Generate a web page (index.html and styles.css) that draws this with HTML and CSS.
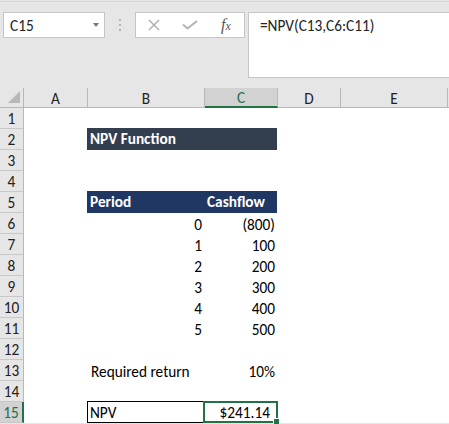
FILE: index.html
```html
<!DOCTYPE html>
<html>
<head>
<meta charset="utf-8">
<link rel="stylesheet" href="styles.css">
</head>
<body>
<div class="toolbar">
  <div class="namebox"><span class="ref">C15</span><span class="caret"></span></div>
  <div class="grip">
    <svg width="2" height="12" viewBox="0 0 2 12"><rect x="0" y="0" width="2" height="2" fill="#b4b4b4"/><rect x="0" y="5" width="2" height="2" fill="#b4b4b4"/><rect x="0" y="10" width="2" height="2" fill="#b4b4b4"/></svg>
  </div>
  <div class="fxbox">
    <svg class="ico-x" width="12" height="12" viewBox="0 0 12 12"><path d="M1 1 L11 11 M11 1 L1 11" stroke="#ababab" stroke-width="1.4" fill="none"/></svg>
    <svg class="ico-ok" width="16" height="10" viewBox="0 0 16 10"><path d="M1 4.5 L5.5 8.5 L15 1" stroke="#b4b4b4" stroke-width="2" fill="none"/></svg>
    <span class="fx">f<span class="fxx">x</span></span>
  </div>
  <div class="formula">=NPV(C13,C6:C11)</div>
</div>

<div class="sheet">
  <div class="hd corner"><svg width="14" height="14" viewBox="0 0 14 14"><polygon points="13,1 13,13 1,13" fill="#b8b8b8"/></svg></div>
  <div class="hd">A</div>
  <div class="hd">B</div>
  <div class="hd sel">C</div>
  <div class="hd">D</div>
  <div class="hd">E</div>
  <div class="hd end"></div>

  <div class="rh">1</div><div class="c"></div><div class="c"></div><div class="c"></div><div class="c"></div><div class="c"></div><div class="c"></div>

  <div class="rh">2</div><div class="c"></div><div class="band gray"><span class="bl">NPV Function</span></div><div class="c"></div><div class="c"></div><div class="c"></div>

  <div class="rh">3</div><div class="c"></div><div class="c"></div><div class="c"></div><div class="c"></div><div class="c"></div><div class="c"></div>

  <div class="rh">4</div><div class="c"></div><div class="c"></div><div class="c"></div><div class="c"></div><div class="c"></div><div class="c"></div>

  <div class="rh">5</div><div class="c"></div><div class="band blue"><span class="bl">Period</span><span class="br">Cashflow</span></div><div class="c"></div><div class="c"></div><div class="c"></div>

  <div class="rh">6</div><div class="c"></div><div class="c r">0</div><div class="c r">(800)</div><div class="c"></div><div class="c"></div><div class="c"></div>
  <div class="rh">7</div><div class="c"></div><div class="c r">1</div><div class="c r">100</div><div class="c"></div><div class="c"></div><div class="c"></div>
  <div class="rh">8</div><div class="c"></div><div class="c r">2</div><div class="c r">200</div><div class="c"></div><div class="c"></div><div class="c"></div>
  <div class="rh">9</div><div class="c"></div><div class="c r">3</div><div class="c r">300</div><div class="c"></div><div class="c"></div><div class="c"></div>
  <div class="rh">10</div><div class="c"></div><div class="c r">4</div><div class="c r">400</div><div class="c"></div><div class="c"></div><div class="c"></div>
  <div class="rh">11</div><div class="c"></div><div class="c r">5</div><div class="c r">500</div><div class="c"></div><div class="c"></div><div class="c"></div>

  <div class="rh">12</div><div class="c"></div><div class="c"></div><div class="c"></div><div class="c"></div><div class="c"></div><div class="c"></div>

  <div class="rh">13</div><div class="c"></div><div class="c">Required return</div><div class="c r">10%</div><div class="c"></div><div class="c"></div><div class="c"></div>

  <div class="rh">14</div><div class="c"></div><div class="c"></div><div class="c"></div><div class="c"></div><div class="c"></div><div class="c"></div>

  <div class="rh rsel">15</div><div class="c"></div><div class="c boxed">NPV</div><div class="c r active">$241.14<span class="handle"></span></div><div class="c"></div><div class="c"></div><div class="c"></div>
</div>
</body>
</html>
```

FILE: styles.css
```css
html, body {
  margin: 0;
  padding: 0;
}
body {
  width: 449px;
  height: 424px;
  overflow: hidden;
  background: #e6e6e6;
  font-family: Carlito, Lato, "Liberation Sans", sans-serif;
  font-size: 15.3px;
  color: #000;
}

/* ---------- formula bar ---------- */
.toolbar {
  box-sizing: border-box;
  height: 87px;
  margin-top: 1px;
  border-top: 1px solid #d5d5d5;
  padding-top: 10px;
  display: flex;
  align-items: flex-start;
}
.namebox {
  box-sizing: border-box;
  margin-left: 3px;
  width: 102px;
  height: 26px;
  background: #fff;
  border: 1px solid #c6c6c6;
  display: flex;
  align-items: center;
  padding-left: 6px;
  color: #222;
}
.caret {
  margin-left: auto;
  margin-right: 5px;
  width: 0;
  height: 0;
  border-left: 3.5px solid transparent;
  border-right: 3.5px solid transparent;
  border-top: 4px solid #7a7a7a;
}
.grip {
  width: 30px;
  height: 26px;
  display: flex;
  align-items: center;
  padding-left: 14px;
  box-sizing: border-box;
}
.grip svg { display: block; }
.fxbox {
  box-sizing: border-box;
  width: 110px;
  height: 26px;
  background: #fff;
  border: 1px solid #c6c6c6;
  display: flex;
  align-items: center;
}
.ico-x { margin-left: 12px; display: block; }
.ico-ok { margin-left: 22px; display: block; }
.fx {
  margin-left: 23px;
  font-family: "Liberation Serif", serif;
  font-style: italic;
  font-size: 16px;
  color: #555;
}
.fxx { font-size: 12px; }
.formula {
  box-sizing: border-box;
  margin-left: 3px;
  flex: 1;
  height: 66px;
  background: #fff;
  border: 1px solid #c6c6c6;
  border-right: none;
  padding-left: 11px;
  line-height: 26px;
  color: #222;
}

/* ---------- sheet ---------- */
.sheet {
  display: grid;
  grid-template-columns: 24px 64px 117px 73px 63px 107px 1fr;
  grid-template-rows: 20px repeat(15, 21px);
  background: #fff;
}
.hd {
  box-sizing: border-box;
  background: #e6e6e6;
  border-right: 1px solid #b8b8b8;
  border-bottom: 1px solid #b8b8b8;
  display: flex;
  align-items: center;
  justify-content: center;
  color: #222;
  padding-top: 1px;
}
.hd.corner {
  align-items: flex-end;
  justify-content: flex-end;
  padding: 0 2px 3px 0;
}
.hd.corner svg { display: block; }
.hd.sel {
  background: #d2d2d2;
  border-bottom: 2px solid #217346;
  color: #217346;
}
.hd.end { border-right: none; }

.rh {
  box-sizing: border-box;
  background: #e6e6e6;
  border-right: 1px solid #b8b8b8;
  border-bottom: 1px solid #c8c8c8;
  display: flex;
  align-items: center;
  justify-content: center;
  color: #222;
  padding-top: 1px;
}
.rh.rsel {
  background: #d2d2d2;
  border-right: 2px solid #217346;
  color: #217346;
}

.c {
  box-sizing: border-box;
  padding: 1px 3px 0 3px;
  line-height: 21px;
  white-space: nowrap;
}
.c.r { text-align: right; }

.band {
  grid-column: span 2;
  margin: -1px 1px 0 -1px;
  display: grid;
  grid-template-columns: 118px 1fr;
  color: #fff;
  font-weight: bold;
  line-height: 22px;
}
.band.gray { background: #333f4f; }
.band.blue { background: #203764; }
.bl { padding-left: 3px; }
.br { padding-left: 2px; }

.boxed {
  margin: -1px 0 0 -1px;
  border: 1px solid #000;
  padding: 1px 0 0 2px;
  line-height: 20px;
}
.active {
  position: relative;
  margin: -1px 0 0 -2px;
  border: 2px solid #217346;
  padding: 1px 6px 0 0;
  line-height: 18px;
  overflow: visible;
}
.handle {
  position: absolute;
  right: -4px;
  bottom: -4px;
  width: 5px;
  height: 5px;
  background: #217346;
  border: 1px solid #fff;
}
```
